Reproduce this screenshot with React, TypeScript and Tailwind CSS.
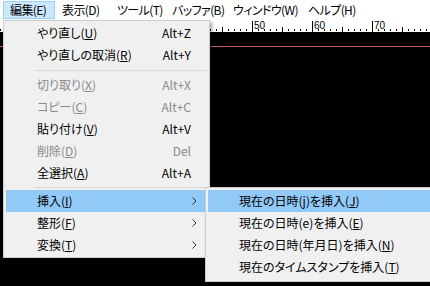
import React from 'react'

const font = { fontFamily: '"Noto Sans CJK JP", "Noto Sans", sans-serif', fontFeatureSettings: '"palt"' }

type Item =
  | { sep: true }
  | { label: string; key: string; shortcut?: string; disabled?: boolean; sub?: boolean; active?: boolean }

const editItems: Item[] = [
  { label: 'やり直し', key: 'U', shortcut: 'Alt+Z' },
  { label: 'やり直しの取消', key: 'R', shortcut: 'Alt+Y' },
  { sep: true },
  { label: '切り取り', key: 'X', shortcut: 'Alt+X', disabled: true },
  { label: 'コピー', key: 'C', shortcut: 'Alt+C', disabled: true },
  { label: '貼り付け', key: 'V', shortcut: 'Alt+V' },
  { label: '削除', key: 'D', shortcut: 'Del', disabled: true },
  { label: '全選択', key: 'A', shortcut: 'Alt+A' },
  { sep: true },
  { label: '挿入', key: 'I', sub: true, active: true },
  { label: '整形', key: 'F', sub: true },
  { label: '変換', key: 'T', sub: true },
]

const insertItems = [
  { label: '現在の日時(j)を挿入', key: 'J', active: true },
  { label: '現在の日時(e)を挿入', key: 'E' },
  { label: '現在の日時(年月日)を挿入', key: 'N' },
  { label: '現在のタイムスタンプを挿入', key: 'T' },
]

// widths measured off the screenshot so each label starts where it should
const menuBar = [
  { label: '編集(E)', w: 'w-[52px]', open: true },
  { label: '表示(D)', w: 'w-[55px]' },
  { label: 'ツール(T)', w: 'w-[55px]' },
  { label: 'バッファ(B)', w: 'w-[61px]' },
  { label: 'ウィンドウ(W)', w: 'w-[75px]' },
  { label: 'ヘルプ(H)', w: 'w-[70px]' },
]

function Chevron() {
  return (
    <svg width="5" height="8" viewBox="0 0 5 8" className="block">
      <path d="M0.5 0.5 L4 4 L0.5 7.5" fill="none" stroke="#333" strokeWidth="1" />
    </svg>
  )
}

function Ruler() {
  const ticks = []
  for (let c = 0; c <= 80; c++) {
    const x = 252 + (c - 50) * 6 + 0.5
    if (x < 0 || x > 430) continue
    if (c % 10 === 0) {
      ticks.push(<line key={c} x1={x} x2={x} y1={1} y2={12} stroke="#000" />)
      ticks.push(
        <text key={'t' + c} x={x + 1.5} y={9} fontSize="10" fill="#000" style={{ fontFamily: '"Liberation Sans", sans-serif' }}>
          {c}
        </text>
      )
    } else if (c % 5 === 0) {
      ticks.push(<line key={c} x1={x} x2={x} y1={7} y2={12} stroke="#000" />)
    } else {
      ticks.push(<line key={c} x1={x} x2={x} y1={9} y2={11} stroke="#000" />)
    }
  }
  return (
    <svg width="430" height="12" className="block bg-white">
      {ticks}
    </svg>
  )
}

export default function App() {
  return (
    <div className="relative w-[430px] h-[286px] overflow-hidden bg-black text-[12px] text-black" style={font}>
      {/* menu bar */}
      <div className="flex h-[20px] items-stretch bg-white pl-[3px] tracking-[-0.6px]">
        {menuBar.map((m) => (
          <div
            key={m.label}
            className={`${m.w} flex-none flex items-center whitespace-nowrap pl-[7px] border ${m.open ? 'bg-[#cce8ff] border-[#99d1ff]' : 'border-transparent'} my-px`}
          >
            <span className="-ml-px leading-none">{m.label}</span>
          </div>
        ))}
      </div>
      <Ruler />
      <div className="pt-[14px]">
        <div className="h-px bg-[#c45555]" />
      </div>

      {/* edit menu */}
      <div className="absolute left-[3px] top-[20px] w-[207px] border border-[#cccccc] bg-[#f0f0f0] py-px shadow-[2px_2px_3px_rgba(0,0,0,0.35)]">
        {editItems.map((it, i) =>
          'sep' in it ? (
            <div key={i} className={`flex items-center pl-[30px] pr-[2px] ${i === 2 ? 'h-[8px]' : 'h-[6px]'}`}>
              <div className="h-px w-full bg-[#d7d7d7]" />
            </div>
          ) : (
            <div
              key={i}
              className={`mx-[2px] flex h-[22px] items-center whitespace-nowrap pl-[31px] pr-[16px] ${it.active ? 'bg-[#91c9f7]' : ''} ${it.disabled ? 'text-[#8a8a8a]' : ''}`}
            >
              <span className="flex-1 leading-none">
                {it.label}(<span className="underline underline-offset-1">{it.key}</span>)
              </span>
              {it.shortcut && <span className="leading-none">{it.shortcut}</span>}
              {it.sub && (
                <span className="-mr-[6px]">
                  <Chevron />
                </span>
              )}
            </div>
          )
        )}
      </div>

      {/* insert submenu */}
      <div className="absolute left-[205px] top-[187px] w-[240px] border border-[#cccccc] bg-[#f0f0f0] pt-[2px] pb-[3px] shadow-[2px_2px_3px_rgba(0,0,0,0.35)]">
        {insertItems.map((it) => (
          <div
            key={it.label}
            className={`ml-[2px] flex h-[22px] items-center whitespace-nowrap pl-[31px] ${it.active ? 'bg-[#91c9f7]' : ''}`}
          >
            <span className="leading-none">
              {it.label}(<span className="underline underline-offset-1">{it.key}</span>)
            </span>
          </div>
        ))}
      </div>
    </div>
  )
}
